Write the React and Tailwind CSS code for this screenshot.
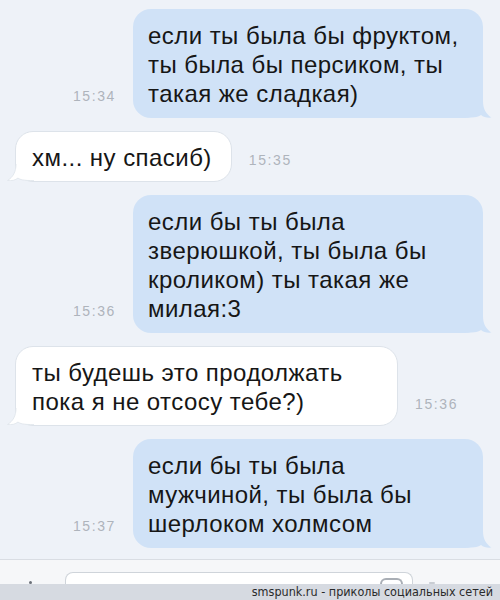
import React from "react";

function TailRight({ color }) {
  return (
    <svg className="absolute right-[-9px] bottom-0 w-[27px] h-[21px]" viewBox="0 0 27 21">
      <path d="M0 0 H18 V4 C18 12 21 17 26.5 20.6 C22 21.1 18.5 20 16 18 C14 19.6 11 20.6 0 20.6 Z" fill={color} />
    </svg>
  );
}

function TailLeft() {
  return (
    <svg className="absolute left-[-9px] bottom-0 w-[27px] h-[21px] -scale-x-100" viewBox="0 0 27 21">
      <path d="M0 0 H18 V4 C18 12 21 17 26.5 20.6 C22 21.1 18.5 20 16 18 C14 19.6 11 20.6 0 20.6 Z" fill="#ffffff" />
      <path d="M18 4 C18 12 21 17 26.5 20.6 C22 21.1 18.5 20 16 18 C14 19.6 11 20.6 0 20.6" fill="none" stroke="#dde3ea" strokeWidth="0.8" />
    </svg>
  );
}

function Time({ t }) {
  return (
    <span className="mb-[14px] text-[14px] leading-[16px] tracking-[1.6px] text-[#aeb4bc] font-['Liberation_Sans',sans-serif]">
      {t}
    </span>
  );
}

function Out({ time, lines }) {
  return (
    <div className="flex justify-end items-end gap-[17px] pr-[17px]">
      <Time t={time} />
      <div className="relative w-[350px] rounded-[18px] bg-[#d0e2f7] pl-[15px] pr-[8px] pt-[12px] pb-[10px] text-[24px] tracking-[0.45px] leading-[29px] text-[#161616] whitespace-nowrap">
        {lines.map((l, i) => (
          <div key={i} className="relative z-10">{l}</div>
        ))}
        <TailRight color="#d0e2f7" />
      </div>
    </div>
  );
}

function In({ time, lines, w }) {
  return (
    <div className="flex justify-start items-end gap-[17px] pl-[15px]">
      <div className={`relative rounded-[18px] bg-white border border-[#dde3ea] pl-[16px] pr-[19px] pt-[11px] pb-[9px] text-[24px] tracking-[0.45px] leading-[29px] text-[#161616] whitespace-nowrap ${w}`}>
        {lines.map((l, i) => (
          <div key={i} className="relative z-10">{l}</div>
        ))}
        <TailLeft />
      </div>
      <Time t={time} />
    </div>
  );
}

export default function App() {
  return (
    <div className="w-[500px] h-[600px] bg-[#eef2f8] flex flex-col overflow-hidden font-['Liberation_Sans',sans-serif]">
      <div className="flex-1 flex flex-col gap-[13px] pt-[9px]">
        <Out time="15:34" lines={["если ты была бы фруктом,", "ты была бы персиком, ты", "такая же сладкая)"]} />
        <In time="15:35" lines={["хм... ну спасиб)"]} w="" />
        <Out time="15:36" lines={["если бы ты была", "зверюшкой, ты была бы", "кроликом) ты такая же", "милая:3"]} />
        <In time="15:36" lines={["ты будешь это продолжать", "пока я не отсосу тебе?)"]} w="w-[383px]" />
        <Out time="15:37" lines={["если бы ты была", "мужчиной, ты была бы", "шерлоком холмсом"]} />
      </div>
      <div className="h-[25px] shrink-0 border-t border-[#d9dde3] bg-[#f6f7f9] flex items-end">
        <div className="w-[65px] h-full flex items-end justify-center pr-[2px]">
          <div className="w-[3px] h-[3px] rounded-full bg-[#6b7078] ml-[-2px]" />
        </div>
        <div className="w-[348px] h-[12px] bg-white border border-b-0 border-[#cfd4da] rounded-t-[8px] flex items-end justify-end pr-[9px]">
          <div className="w-[23px] h-[6px] border-2 border-b-0 border-[#a9aeb5] rounded-t-full" />
        </div>
        <div className="w-[87px] flex justify-start pl-[16px]">
          <div className="w-[6px] h-[2px] bg-[#c9cdd3] rounded-full" />
        </div>
      </div>
      <div className="h-[16px] shrink-0 bg-[#d6dae1] flex items-center justify-end pr-[7px]">
        <span className="text-[12.5px] leading-[16px] text-[#2a2a2a] font-['DejaVu_Sans_Condensed','DejaVu_Sans',sans-serif]">
          smspunk.ru - приколы социальных сетей
        </span>
      </div>
    </div>
  );
}
